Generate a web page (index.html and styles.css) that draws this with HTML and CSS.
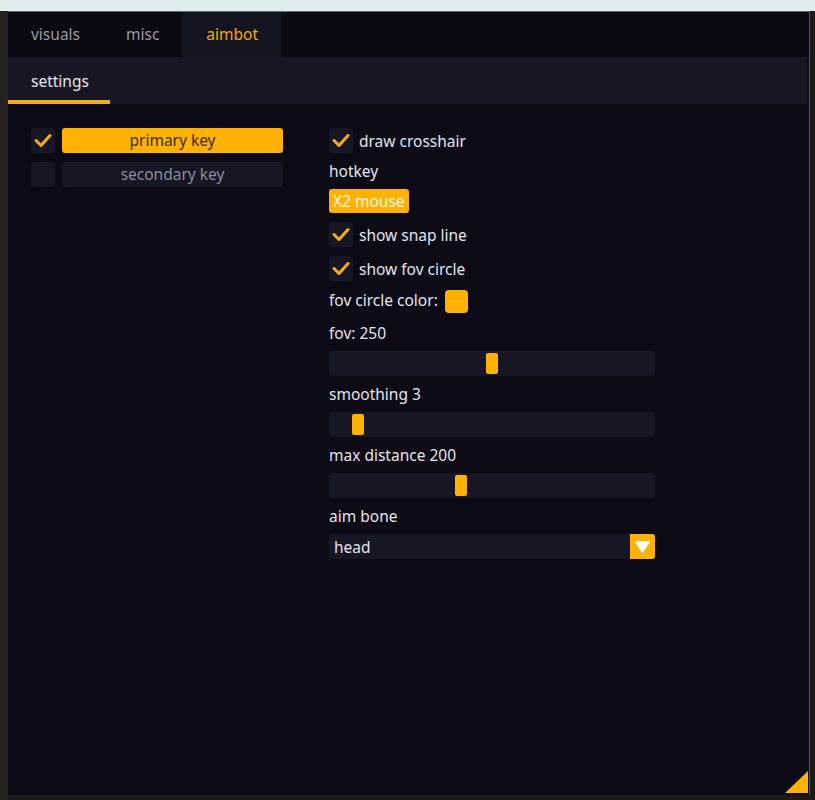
FILE: index.html
```html
<!DOCTYPE html>
<html>
<head>
  <meta charset="UTF-8" />
  <title>aimbot</title>
  <link rel="stylesheet" href="styles.css">
</head>
<body>

<div class="scene">
  <div class="window">
    <div class="tabs">
      <div class="tab">visuals</div>
      <div class="tab">misc</div>
      <div class="tab active">aimbot</div>
    </div>
    <div class="subtabs">
      <div class="subtab active">settings</div>
    </div>

    <div class="content">
      <!-- key select -->
      <div class="col left">
        <div class="row">
          <div class="check on"><svg viewBox="0 0 24 24"><polyline points="5,12 10,17 19,7" /></svg></div>
          <div class="btn wide on">primary key</div>
        </div>
        <div class="row">
          <div class="check"></div>
          <div class="btn wide">secondary key</div>
        </div>
      </div>

      <!-- options -->
      <div class="col right">
        <div class="row item">
          <div class="check on"><svg viewBox="0 0 24 24"><polyline points="5,12 10,17 19,7" /></svg></div>
          <span class="label">draw crosshair</span>
        </div>
        <div class="text">hotkey</div>
        <div class="btn hotkey on">X2 mouse</div>
        <div class="row item">
          <div class="check on"><svg viewBox="0 0 24 24"><polyline points="5,12 10,17 19,7" /></svg></div>
          <span class="label">show snap line</span>
        </div>
        <div class="row item">
          <div class="check on"><svg viewBox="0 0 24 24"><polyline points="5,12 10,17 19,7" /></svg></div>
          <span class="label">show fov circle</span>
        </div>
        <div class="row item color-row">
          <span class="label">fov circle color:</span>
          <div class="swatch"></div>
        </div>

        <div class="text">fov: 250</div>
        <div class="slider"><div class="grab" style="left: 157px;"></div></div>
        <div class="text">smoothing 3</div>
        <div class="slider"><div class="grab" style="left: 23px;"></div></div>
        <div class="text">max distance 200</div>
        <div class="slider"><div class="grab" style="left: 126px;"></div></div>
        <div class="text">aim bone</div>
        <div class="combo">
          <span class="combo-value">head</span>
          <div class="combo-arrow"><svg viewBox="0 0 25 25"><polygon points="6,8 19,8 12.5,18" /></svg></div>
        </div>
      </div>
    </div>

    <div class="grip"></div>
  </div>
</div>

</body>
</html>
```

FILE: styles.css
```css
body {
  margin: 0;
  font-family: "Noto Sans", "Open Sans", sans-serif;
  font-size: 15.5px;
  color: #e4e4ea;
}

.scene {
  width: 815px;
  height: 800px;
  box-sizing: border-box;
  padding: 11px 5px 5px 8px;
  background:
    linear-gradient(to bottom, #dfeced 0, #dfeced 11px, transparent 11px),
    linear-gradient(to right, #24221e 0, #24221e 8px, #1c1a16 8px);
}

.window {
  position: relative;
  height: 784px;
  background: #0b0a15;
  border-top: 1px solid #6a6a70;
  border-right: 1px solid #55555c;
  box-sizing: border-box;
}

.tabs {
  display: flex;
  height: 45px;
  background: #0a0912;
}
.tab {
  padding: 0 23px;
  line-height: 45px;
  color: #9a9aa5;
}
.tab.active {
  background: #151522;
  color: #f2a816;
  padding: 0 23px 0 24px;
}

.subtabs {
  height: 47px;
  background: #161624;
  margin-right: 2px;
  display: flex;
}
.subtab {
  padding: 0 23px;
  line-height: 48px;
  height: 43px;
  color: #e6e6ec;
}
.subtab.active {
  border-bottom: 4px solid #f7ad12;
  width: 56px;
}

.content {
  display: flex;
  padding: 24px 0 0 23px;
}
.col { display: flex; flex-direction: column; }
.col.left { width: 298px; gap: 9px; }
.col.left .row { gap: 7px; }
.col.right { width: 326px; }

.row {
  display: flex;
  align-items: center;
  gap: 6px;
  height: 25px;
}
.item { margin-bottom: 9px; }

.check {
  width: 24px;
  height: 25px;
  border-radius: 3px;
  background: #161625;
  flex-shrink: 0;
}
.check svg { width: 24px; height: 25px; display: block; }
.check polyline {
  fill: none;
  stroke: #f7ad12;
  stroke-width: 3;
  stroke-linecap: round;
  stroke-linejoin: round;
}

.label { color: #e4e4ea; }
.text {
  height: 19px;
  line-height: 19px;
  margin-bottom: 8px;
}

.btn {
  height: 25px;
  line-height: 25px;
  border-radius: 3px;
  background: #161625;
  color: #8c8c98;
  text-align: center;
}
.btn.wide { width: 221px; }
.btn.on { background: #ffb203; color: #3b2c0c; }
.btn.hotkey {
  align-self: flex-start;
  height: 24px;
  line-height: 24px;
  padding: 0 4px;
  color: #fff7e8;
  margin-bottom: 9px;
}

.color-row { gap: 7px; align-items: flex-start; }
.color-row .label { line-height: 20px; }
.swatch {
  width: 23px;
  height: 23px;
  border-radius: 4px;
  background: #ffb203;
}

.slider {
  position: relative;
  height: 25px;
  border-radius: 3px;
  background: #161625;
  margin-bottom: 9px;
}
.grab {
  position: absolute;
  top: 2px;
  width: 12px;
  height: 21px;
  border-radius: 2px;
  background: #ffb203;
}

.combo {
  display: flex;
  align-items: center;
  height: 25px;
  border-radius: 3px;
  background: #161625;
}
.combo-value { flex: 1; padding-left: 5px; }
.combo-arrow {
  width: 25px;
  height: 25px;
  border-radius: 0 3px 3px 0;
  background: #ffb203;
}
.combo-arrow svg { display: block; width: 25px; height: 25px; }
.combo-arrow polygon { fill: #ffffff; stroke: #ffffff; stroke-width: 1.5; stroke-linejoin: round; }

.grip {
  position: absolute;
  right: 1px;
  bottom: 2px;
  width: 0;
  height: 0;
  border-left: 23px solid transparent;
  border-bottom: 22px solid #ffb203;
}
```
